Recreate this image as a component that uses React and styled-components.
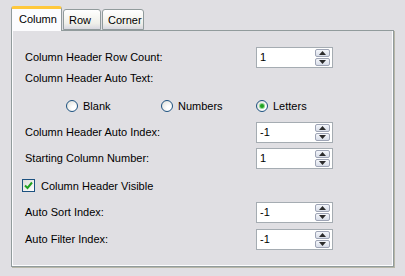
import React, { useState } from 'react'
import styled, { createGlobalStyle } from 'styled-components'

const GlobalStyle = createGlobalStyle`
  html, body { margin: 0; padding: 0; background: #e0dfe3; }
  body {
    font-family: "Liberation Sans", Arial, sans-serif;
    font-size: 11px;
    color: #000;
  }
`

const Page = styled.div`
  width: 405px;
  height: 276px;
  padding: 6px 12px 0 11px;
  box-sizing: border-box;
`

const TabStrip = styled.div`
  display: flex;
  align-items: flex-end;
  height: 24px;
  position: relative;
  z-index: 1;
`

const Tab = styled.div`
  box-sizing: border-box;
  height: ${p => (p.$active ? '25px' : '21px')};
  width: ${p => p.$w}px;
  margin-left: ${p => (p.$active ? 0 : 1)}px;
  margin-bottom: ${p => (p.$active ? '-1px' : '0')};
  padding: ${p => (p.$active ? '3px 0 0 7px' : '3px 0 0 5px')};
  border: 1px solid #919b9c;
  border-bottom: ${p => (p.$active ? 'none' : '1px solid #919b9c')};
  border-top: ${p => (p.$active ? '3px solid #ffc83c' : '1px solid #919b9c')};
  border-radius: 3px 3px 0 0;
  background: ${p =>
    p.$active ? '#fcfcfe' : 'linear-gradient(#ffffff, #f0f0ea 70%, #d8d8e0)'};
  font-size: 11px;
  line-height: 14px;
  white-space: nowrap;
`

const Panel = styled.div`
  box-sizing: border-box;
  width: 383px;
  height: 237px;
  border: 1px solid #919b9c;
  background: #e0dfe3;
  box-shadow: inset 1px 0 0 #fcfcfe, inset -1px -1px 0 #fcfcfe,
    1px 1px 0 #b8b7a8;
  padding: 16px 0 0 13px;
  display: flex;
  flex-direction: column;
`

const FieldRow = styled.div`
  display: grid;
  grid-template-columns: 231px 77px;
  align-items: center;
  height: 21px;
  margin-top: ${p => p.$mt || 0}px;
`

const Label = styled.div`
  white-space: nowrap;
  margin-top: ${p => p.$mt || 0}px;
  line-height: 13px;
`

const SpinBox = styled.div`
  box-sizing: border-box;
  height: 21px;
  border: 1px solid #a5acb2;
  background: #fff;
  display: flex;
  align-items: center;
  padding: 0 2px 0 2px;
`

const SpinValue = styled.div`
  flex: 1;
  line-height: 13px;
  padding-left: 1px;
`

const SpinButtons = styled.div`
  display: flex;
  flex-direction: column;
  gap: 1px;
`

const SpinButton = styled.div`
  box-sizing: border-box;
  width: 15px;
  height: 8px;
  border: 1px solid #9ea4b5;
  border-radius: 2px;
  background: linear-gradient(#f4f6fb, #d8dde8);
  display: flex;
  align-items: center;
  justify-content: center;
`

const RadioGroup = styled.div`
  display: grid;
  grid-template-columns: 95px 95px 95px;
  margin: 13px 0 0 41px;
  height: 15px;
  align-items: center;
`

const RadioItem = styled.div`
  display: flex;
  align-items: center;
  gap: 5px;
`

const RadioCircle = styled.div`
  box-sizing: border-box;
  width: 12px;
  height: 12px;
  border-radius: 50%;
  border: 1px solid #1c5180;
  background: radial-gradient(circle at 70% 70%, #ffffff 20%, #dcdcd6 100%);
  display: flex;
  align-items: center;
  justify-content: center;
`

const RadioDot = styled.div`
  width: 4px;
  height: 4px;
  border-radius: 50%;
  background: #21a121;
  box-shadow: 0 0 0 1px #8fd88f;
`

const CheckRow = styled.div`
  display: flex;
  align-items: center;
  gap: 6px;
  margin: 10px 0 0 -3px;
  height: 13px;
`

const CheckBox = styled.div`
  box-sizing: border-box;
  width: 13px;
  height: 13px;
  border: 1px solid #1c5180;
  background: linear-gradient(135deg, #dcdcd7, #ffffff);
  display: flex;
  align-items: center;
  justify-content: center;
`

const ArrowUp = () => (
  <svg width="7" height="4" viewBox="0 0 7 4">
    <path d="M3.5 0 L7 4 L0 4 Z" fill="#2b2b2b" />
  </svg>
)

const ArrowDown = () => (
  <svg width="7" height="4" viewBox="0 0 7 4">
    <path d="M0 0 L7 0 L3.5 4 Z" fill="#2b2b2b" />
  </svg>
)

const Spinner = ({ value }) => (
  <SpinBox>
    <SpinValue>{value}</SpinValue>
    <SpinButtons>
      <SpinButton><ArrowUp /></SpinButton>
      <SpinButton><ArrowDown /></SpinButton>
    </SpinButtons>
  </SpinBox>
)

const Radio = ({ label, checked }) => (
  <RadioItem>
    <RadioCircle>{checked && <RadioDot />}</RadioCircle>
    <span>{label}</span>
  </RadioItem>
)

const App = () => {
  const [autoText] = useState('Letters')

  return (
    <Page>
      <GlobalStyle />
      <TabStrip>
        <Tab $active $w={51}>Column</Tab>
        <Tab $w={38}>Row</Tab>
        <Tab $w={42}>Corner</Tab>
      </TabStrip>
      <Panel>
        <FieldRow>
          <Label>Column Header Row Count:</Label>
          <Spinner value="1" />
        </FieldRow>
        <Label $mt={4}>Column Header Auto Text:</Label>
        <RadioGroup>
          {['Blank', 'Numbers', 'Letters'].map(o => (
            <Radio key={o} label={o} checked={autoText === o} />
          ))}
        </RadioGroup>
        <FieldRow $mt={9}>
          <Label>Column Header Auto Index:</Label>
          <Spinner value="-1" />
        </FieldRow>
        <FieldRow $mt={5}>
          <Label>Starting Column Number:</Label>
          <Spinner value="1" />
        </FieldRow>
        <CheckRow>
          <CheckBox>
            <svg width="9" height="9" viewBox="0 0 9 9">
              <path d="M1 4.5 L3.5 7 L8 1.5" stroke="#21a121" strokeWidth="2" fill="none" />
            </svg>
          </CheckBox>
          <span>Column Header Visible</span>
        </CheckRow>
        <FieldRow $mt={10}>
          <Label>Auto Sort Index:</Label>
          <Spinner value="-1" />
        </FieldRow>
        <FieldRow $mt={6}>
          <Label>Auto Filter Index:</Label>
          <Spinner value="-1" />
        </FieldRow>
      </Panel>
    </Page>
  )
}

export default App
